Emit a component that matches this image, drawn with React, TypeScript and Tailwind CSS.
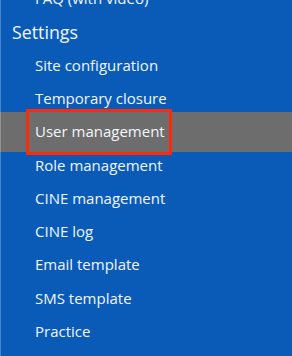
const items = [
  "Site configuration",
  "Temporary closure",
  "User management",
  "Role management",
  "CINE management",
  "CINE log",
  "Email template",
  "SMS template",
  "Practice",
];

export default function App() {
  const selected = "User management";

  return (
    <div
      className="relative h-[356px] w-[292px] overflow-hidden bg-[#0a5bb8] text-[#f2f6fb]"
      style={{ fontFamily: '"Open Sans", "Noto Sans", sans-serif' }}
    >
      <nav className="-mt-[18px] flex flex-col">
        <div className="flex h-[33.25px] items-center pl-[35px] text-[15px]">FAQ (with video)</div>
        <div className="flex h-[33.25px] items-center pl-[12px] text-[17.8px]">Settings</div>
        {items.map((item) =>
          item === selected ? (
            <div
              key={item}
              className="relative z-0 -my-[3.5px] flex h-[40.25px] items-center bg-[#6d6d6d] pl-[35px] text-[15px]"
            >
              {item}
            </div>
          ) : (
            <div key={item} className="flex h-[33.25px] items-center pl-[35px] text-[15px]">
              {item}
            </div>
          )
        )}
      </nav>

      {/* left edge highlight */}
      <div className="absolute left-0 top-0 h-full w-px bg-white/25" />

      {/* annotation box */}
      <div className="absolute left-[26px] top-[109px] h-[46px] w-[146px] border-[3px] border-[#fa2a0a]" />
    </div>
  );
}
